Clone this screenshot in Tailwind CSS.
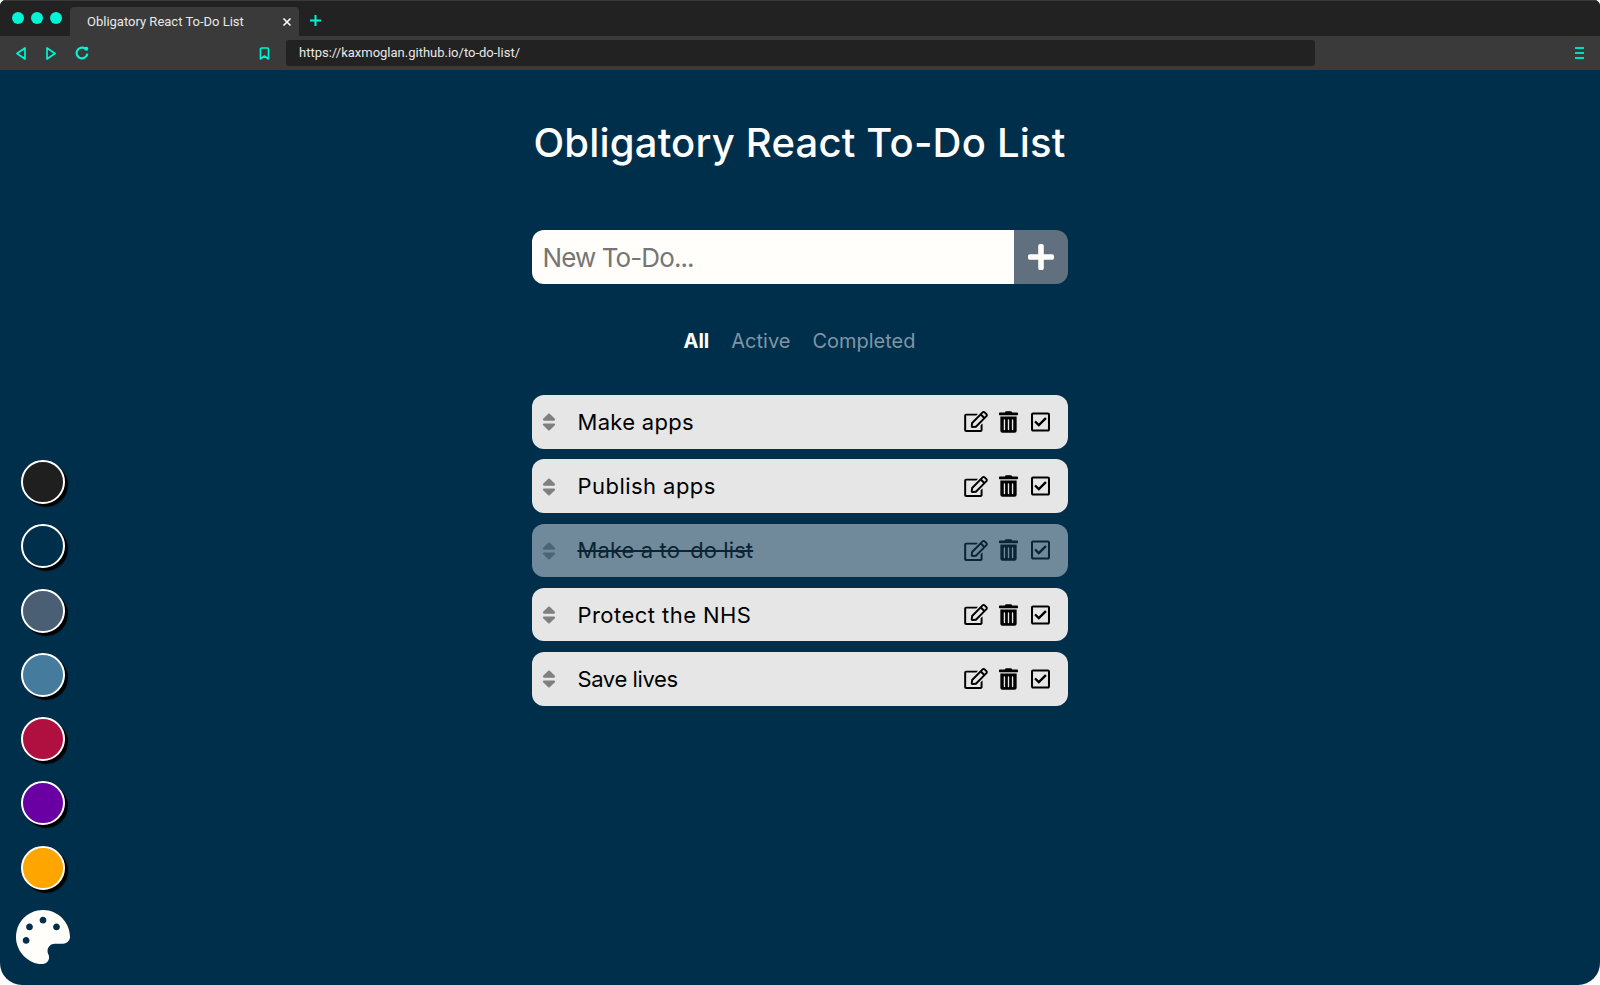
<!DOCTYPE html>
<html>
<head>
<meta charset="utf-8">
<title>Obligatory React To-Do List</title>
<script src="https://cdn.jsdelivr.net/npm/@tailwindcss/browser@4"></script>
</head>
<body class="bg-white h-[985px] overflow-hidden font-['Inter',sans-serif]">
<div class="h-[985px] flex flex-col bg-[#002f4b] rounded-t-[6px] rounded-b-[22px] overflow-hidden">

  <!-- browser chrome -->
  <div class="h-[36px] bg-[#222222] border-t border-[#3a3a3a] flex items-end shrink-0">
    <div class="flex items-center gap-[7px] w-[70px] pl-[12px] pb-[12px]">
      <span class="w-[12px] h-[12px] rounded-full bg-[#00f5d4]"></span>
      <span class="w-[12px] h-[12px] rounded-full bg-[#00f5d4]"></span>
      <span class="w-[12px] h-[12px] rounded-full bg-[#00f5d4]"></span>
    </div>
    <div class="w-[229px] h-[29px] bg-[#3a3a3a] rounded-t-[4px] flex items-center pl-[17px] pr-[7px] justify-between">
      <span class="font-['Roboto',sans-serif] text-[13px] text-[#e8e8e8] whitespace-nowrap">Obligatory React To-Do List</span>
      <svg class="w-[10px] h-[10px]" viewBox="0 0 10 10" fill="none" stroke="#ffffff" stroke-width="1.6"><path d="M1.5 1.5l7 7M8.5 1.5l-7 7"/></svg>
    </div>
    <svg class="w-[13px] h-[13px] ml-[10px] mb-[9px]" viewBox="0 0 13 13" fill="none" stroke="#00f5d4" stroke-width="2"><path d="M6.5 1v11M1 6.5h11"/></svg>
  </div>
  <div class="h-[34px] bg-[#3a3a3a] flex items-center shrink-0">
    <svg class="w-[10px] h-[13px] ml-[16px]" viewBox="0 0 10 13" fill="none" stroke="#00f5d4" stroke-width="1.7" stroke-linejoin="round"><path d="M9 1v11L1 6.5z"/></svg>
    <svg class="w-[10px] h-[13px] ml-[20px]" viewBox="0 0 10 13" fill="none" stroke="#00f5d4" stroke-width="1.7" stroke-linejoin="round"><path d="M1 1v11l8-5.500z"/></svg>
    <svg class="w-[14px] h-[14px] ml-[19px]" viewBox="0 0 13 13" fill="none" stroke="#00f5d4" stroke-width="2"><path d="M11.500 7a5 5 0 1 1-2-4.500"/><circle cx="10.500" cy="2.500" r="1.900" fill="#00f5d4" stroke="none"/></svg>
    <svg class="w-[11px] h-[13px] ml-[170px]" viewBox="0 0 11 13" fill="none" stroke="#00f5d4" stroke-width="1.6" stroke-linejoin="round"><path d="M1.500 2a1 1 0 0 1 1-1h6a1 1 0 0 1 1 1v10l-4-3-4 3z"/></svg>
    <div class="w-[1029px] h-[26px] ml-[16px] bg-[#222222] rounded-[3px] flex items-center pl-[13px]">
      <span class="font-['Roboto',sans-serif] text-[13px] text-[#e8e8e8] whitespace-nowrap">https://kaxmoglan.github.io/to-do-list/</span>
    </div>
    <div class="ml-auto mr-[16px] w-[9px] flex flex-col gap-[3px]">
      <span class="h-[2px] bg-[#00dcc0]"></span>
      <span class="h-[2px] bg-[#00dcc0]"></span>
      <span class="h-[2px] bg-[#00dcc0]"></span>
    </div>
  </div>

  <!-- page -->
  <div class="flex-1 grid grid-cols-[86px_1fr_87px]">
    <aside class="flex flex-col items-center justify-end gap-[20.300px] pb-[21px]">
      <button class="w-[44px] h-[44px] rounded-full border-2 border-white bg-[#1f1f1f] shadow-[3px_3px_1px_#000]"></button>
      <button class="w-[44px] h-[44px] rounded-full border-2 border-white bg-[#002f4b] shadow-[3px_3px_1px_#000]"></button>
      <button class="w-[44px] h-[44px] rounded-full border-2 border-white bg-[#4a5f73] shadow-[3px_3px_1px_#000]"></button>
      <button class="w-[44px] h-[44px] rounded-full border-2 border-white bg-[#457b9d] shadow-[3px_3px_1px_#000]"></button>
      <button class="w-[44px] h-[44px] rounded-full border-2 border-white bg-[#b0103f] shadow-[3px_3px_1px_#000]"></button>
      <button class="w-[44px] h-[44px] rounded-full border-2 border-white bg-[#6a00a3] shadow-[3px_3px_1px_#000]"></button>
      <button class="w-[44px] h-[44px] rounded-full border-2 border-white bg-[#ffa500] shadow-[3px_3px_1px_#000]"></button>
      <svg class="w-[54px] h-[54px]" viewBox="0 0 512 512" fill="#fffefa"><path d="M204.3 5C104.9 24.400 24.800 104.300 5.200 203.400c-37 187 131.700 326.400 258.800 306.700 41.200-6.400 61.400-54.600 42.500-91.700-23.100-45.400 9.900-98.400 60.900-98.400h79.700c35.800 0 64.800-29.600 64.900-65.300C511.500 97.100 368.100-26.900 204.300 5zM96 320c-17.700 0-32-14.300-32-32s14.300-32 32-32 32 14.300 32 32-14.300 32-32 32zm32-128c-17.700 0-32-14.300-32-32s14.300-32 32-32 32 14.300 32 32-14.300 32-32 32zm128-64c-17.700 0-32-14.300-32-32s14.300-32 32-32 32 14.300 32 32-14.300 32-32 32zm128 64c-17.700 0-32-14.300-32-32s14.300-32 32-32 32 14.300 32 32-14.300 32-32 32z"/></svg>
    </aside>

    <main class="flex flex-col items-center pt-[49px]">
      <h1 class="h-[48px] leading-[48px] text-[40px] font-medium tracking-[0.2px] text-white whitespace-nowrap">Obligatory React To-Do List</h1>

      <div class="w-[536px] h-[54px] mt-[63px] flex rounded-[12px] overflow-hidden">
        <div class="flex-1 bg-[#fffefa] flex items-center pl-[11px] text-[26px] tracking-[-0.9px] text-[#757575]">New To-Do...</div>
        <button class="w-[54px] bg-[#61707f] flex items-center justify-center">
          <svg class="w-[26px] h-[30px]" viewBox="0 0 448 512" fill="#fffefa"><path d="M416 208H272V64c0-17.670-14.330-32-32-32h-32c-17.670 0-32 14.330-32 32v144H32c-17.670 0-32 14.330-32 32v32c0 17.670 14.330 32 32 32h144v144c0 17.670 14.330 32 32 32h32c17.670 0 32-14.330 32-32V304h144c17.670 0 32-14.330 32-32v-32c0-17.670-14.330-32-32-32z"/></svg>
        </button>
      </div>

      <div class="h-[30px] mt-[41px] pt-[1px] flex items-center gap-[22px] text-[20px] leading-[30px] whitespace-nowrap text-[#7f95a5]">
        <span class="font-bold text-white">All</span>
        <span>Active</span>
        <span>Completed</span>
      </div>

      <ul class="w-[536px] mt-[40px] flex flex-col gap-[10.700px]" id="list">
        <li class="h-[53.600px] bg-[#e6e6e6] rounded-[12px] flex items-center text-black">
          <svg class="w-[14px] h-[22px] ml-[10px] mt-[1px] text-[#7f7f7f]" viewBox="0 0 320 512" fill="currentColor"><path d="M41 288h238c21.400 0 32.100 25.900 17 41L177 448c-9.400 9.400-24.600 9.400-33.900 0L24 329c-15.100-15.100-4.400-41 17-41zm255-105L177 64c-9.400-9.400-24.600-9.400-33.900 0L24 183c-15.100 15.100-4.400 41 17 41h238c21.400 0 32.100-25.900 17-41z"/></svg>
          <span class="ml-[22px] mt-[1px] text-[22px] tracking-[0.3px] whitespace-nowrap">Make apps</span>
          <svg class="w-[24px] h-[21px] ml-auto" viewBox="0 0 576 512" fill="currentColor"><path d="M402.300 344.900l32-32c5-5 13.700-1.500 13.700 5.700V464c0 26.500-21.500 48-48 48H48c-26.500 0-48-21.500-48-48V112c0-26.500 21.500-48 48-48h273.500c7.100 0 10.700 8.600 5.700 13.700l-32 32c-1.500 1.500-3.500 2.300-5.700 2.300H48v352h352V350.500c0-2.100.8-4.100 2.300-5.600zm156.600-201.800L296.300 405.700l-90.400 10c-26.200 2.900-48.500-19.200-45.600-45.600l10-90.400L432.900 17.100c22.900-22.900 59.900-22.900 82.700 0l43.200 43.200c22.900 22.900 22.900 60 .1 82.800zM460.100 174L402 115.900 216.200 301.800l-7.300 65.300 65.300-7.300L460.100 174zm64.800-79.700l-43.200-43.200c-4.100-4.100-10.800-4.100-14.800 0L436 82l58.100 58.100 30.900-30.900c4-4.200 4-10.800-.1-14.900z"/></svg>
          <svg class="w-[19px] h-[22px] ml-[11px]" viewBox="0 0 448 512" fill="currentColor"><path d="M32 464a48 48 0 0 0 48 48h288a48 48 0 0 0 48-48V128H32zm272-256a16 16 0 0 1 32 0v224a16 16 0 0 1-32 0zm-96 0a16 16 0 0 1 32 0v224a16 16 0 0 1-32 0zm-96 0a16 16 0 0 1 32 0v224a16 16 0 0 1-32 0zM432 32H312l-9.400-18.700A24 24 0 0 0 281.100 0H166.800a23.720 23.720 0 0 0-21.400 13.300L136 32H16A16 16 0 0 0 0 48v32a16 16 0 0 0 16 16h416a16 16 0 0 0 16-16V48a16 16 0 0 0-16-16z"/></svg>
          <svg class="w-[19px] h-[22px] ml-[13px] mr-[18px]" viewBox="0 0 448 512" fill="currentColor"><path d="M400 32H48C21.490 32 0 53.490 0 80v352c0 26.510 21.490 48 48 48h352c26.510 0 48-21.490 48-48V80c0-26.510-21.490-48-48-48zm0 400H48V80h352v352zm-35.864-241.724L191.547 361.480c-4.705 4.667-12.303 4.637-16.970-.068l-90.781-91.516c-4.667-4.705-4.637-12.303.069-16.971l22.719-22.536c4.705-4.667 12.303-4.637 16.970.069l59.792 60.277 141.352-140.216c4.705-4.667 12.303-4.637 16.970.068l22.536 22.718c4.667 4.706 4.637 12.304-.068 16.971z"/></svg>
        </li>
        <li class="h-[53.600px] bg-[#e6e6e6] rounded-[12px] flex items-center text-black">
          <svg class="w-[14px] h-[22px] ml-[10px] mt-[1px] text-[#7f7f7f]" viewBox="0 0 320 512" fill="currentColor"><path d="M41 288h238c21.400 0 32.100 25.900 17 41L177 448c-9.400 9.400-24.600 9.400-33.900 0L24 329c-15.100-15.100-4.400-41 17-41zm255-105L177 64c-9.400-9.400-24.600-9.400-33.900 0L24 183c-15.100 15.100-4.400 41 17 41h238c21.400 0 32.100-25.900 17-41z"/></svg>
          <span class="ml-[22px] mt-[1px] text-[22px] tracking-[0.45px] whitespace-nowrap">Publish apps</span>
          <svg class="w-[24px] h-[21px] ml-auto" viewBox="0 0 576 512" fill="currentColor"><path d="M402.300 344.900l32-32c5-5 13.700-1.500 13.700 5.700V464c0 26.500-21.500 48-48 48H48c-26.500 0-48-21.500-48-48V112c0-26.500 21.500-48 48-48h273.500c7.100 0 10.700 8.600 5.700 13.700l-32 32c-1.500 1.500-3.500 2.300-5.700 2.300H48v352h352V350.500c0-2.100.8-4.100 2.300-5.600zm156.600-201.800L296.300 405.700l-90.400 10c-26.200 2.900-48.500-19.200-45.600-45.600l10-90.400L432.900 17.100c22.900-22.900 59.900-22.900 82.700 0l43.200 43.200c22.900 22.900 22.900 60 .1 82.800zM460.100 174L402 115.900 216.200 301.800l-7.300 65.300 65.300-7.300L460.100 174zm64.800-79.700l-43.200-43.200c-4.100-4.100-10.800-4.100-14.800 0L436 82l58.100 58.100 30.900-30.900c4-4.200 4-10.800-.1-14.900z"/></svg>
          <svg class="w-[19px] h-[22px] ml-[11px]" viewBox="0 0 448 512" fill="currentColor"><path d="M32 464a48 48 0 0 0 48 48h288a48 48 0 0 0 48-48V128H32zm272-256a16 16 0 0 1 32 0v224a16 16 0 0 1-32 0zm-96 0a16 16 0 0 1 32 0v224a16 16 0 0 1-32 0zm-96 0a16 16 0 0 1 32 0v224a16 16 0 0 1-32 0zM432 32H312l-9.400-18.700A24 24 0 0 0 281.100 0H166.800a23.720 23.720 0 0 0-21.400 13.300L136 32H16A16 16 0 0 0 0 48v32a16 16 0 0 0 16 16h416a16 16 0 0 0 16-16V48a16 16 0 0 0-16-16z"/></svg>
          <svg class="w-[19px] h-[22px] ml-[13px] mr-[18px]" viewBox="0 0 448 512" fill="currentColor"><path d="M400 32H48C21.490 32 0 53.490 0 80v352c0 26.510 21.490 48 48 48h352c26.510 0 48-21.490 48-48V80c0-26.510-21.490-48-48-48zm0 400H48V80h352v352zm-35.864-241.724L191.547 361.480c-4.705 4.667-12.303 4.637-16.970-.068l-90.781-91.516c-4.667-4.705-4.637-12.303.069-16.971l22.719-22.536c4.705-4.667 12.303-4.637 16.970.069l59.792 60.277 141.352-140.216c4.705-4.667 12.303-4.637 16.970.068l22.536 22.718c4.667 4.706 4.637 12.304-.068 16.971z"/></svg>
        </li>
        <li class="h-[53.600px] bg-[#718a9b] rounded-[12px] flex items-center text-[#0b2433]">
          <svg class="w-[14px] h-[22px] ml-[10px] mt-[1px] text-[#4d6474]" viewBox="0 0 320 512" fill="currentColor"><path d="M41 288h238c21.400 0 32.100 25.900 17 41L177 448c-9.400 9.400-24.600 9.400-33.900 0L24 329c-15.100-15.100-4.400-41 17-41zm255-105L177 64c-9.400-9.400-24.600-9.400-33.900 0L24 183c-15.100 15.100-4.400 41 17 41h238c21.400 0 32.100-25.900 17-41z"/></svg>
          <span class="ml-[22px] mt-[1px] text-[22px] tracking-[0.1px] whitespace-nowrap line-through">Make a to-do list</span>
          <svg class="w-[24px] h-[21px] ml-auto" viewBox="0 0 576 512" fill="currentColor"><path d="M402.300 344.900l32-32c5-5 13.700-1.500 13.700 5.700V464c0 26.500-21.500 48-48 48H48c-26.500 0-48-21.500-48-48V112c0-26.500 21.500-48 48-48h273.500c7.100 0 10.700 8.600 5.700 13.700l-32 32c-1.500 1.500-3.500 2.300-5.700 2.300H48v352h352V350.500c0-2.100.8-4.100 2.300-5.600zm156.600-201.800L296.300 405.700l-90.400 10c-26.200 2.900-48.500-19.200-45.600-45.600l10-90.400L432.900 17.100c22.900-22.900 59.900-22.900 82.700 0l43.200 43.200c22.900 22.900 22.900 60 .1 82.800zM460.100 174L402 115.900 216.200 301.800l-7.300 65.300 65.300-7.300L460.100 174zm64.800-79.700l-43.200-43.200c-4.100-4.100-10.800-4.100-14.800 0L436 82l58.100 58.100 30.900-30.900c4-4.200 4-10.800-.1-14.900z"/></svg>
          <svg class="w-[19px] h-[22px] ml-[11px]" viewBox="0 0 448 512" fill="currentColor"><path d="M32 464a48 48 0 0 0 48 48h288a48 48 0 0 0 48-48V128H32zm272-256a16 16 0 0 1 32 0v224a16 16 0 0 1-32 0zm-96 0a16 16 0 0 1 32 0v224a16 16 0 0 1-32 0zm-96 0a16 16 0 0 1 32 0v224a16 16 0 0 1-32 0zM432 32H312l-9.400-18.700A24 24 0 0 0 281.100 0H166.800a23.720 23.720 0 0 0-21.400 13.300L136 32H16A16 16 0 0 0 0 48v32a16 16 0 0 0 16 16h416a16 16 0 0 0 16-16V48a16 16 0 0 0-16-16z"/></svg>
          <svg class="w-[19px] h-[22px] ml-[13px] mr-[18px]" viewBox="0 0 448 512" fill="currentColor"><path d="M400 32H48C21.490 32 0 53.490 0 80v352c0 26.510 21.490 48 48 48h352c26.510 0 48-21.490 48-48V80c0-26.510-21.490-48-48-48zm0 400H48V80h352v352zm-35.864-241.724L191.547 361.480c-4.705 4.667-12.303 4.637-16.970-.068l-90.781-91.516c-4.667-4.705-4.637-12.303.069-16.971l22.719-22.536c4.705-4.667 12.303-4.637 16.970.069l59.792 60.277 141.352-140.216c4.705-4.667 12.303-4.637 16.970.068l22.536 22.718c4.667 4.706 4.637 12.304-.068 16.971z"/></svg>
        </li>
        <li class="h-[53.600px] bg-[#e6e6e6] rounded-[12px] flex items-center text-black">
          <svg class="w-[14px] h-[22px] ml-[10px] mt-[1px] text-[#7f7f7f]" viewBox="0 0 320 512" fill="currentColor"><path d="M41 288h238c21.400 0 32.100 25.900 17 41L177 448c-9.400 9.400-24.600 9.400-33.900 0L24 329c-15.100-15.100-4.400-41 17-41zm255-105L177 64c-9.400-9.400-24.600-9.400-33.900 0L24 183c-15.100 15.100-4.400 41 17 41h238c21.400 0 32.100-25.900 17-41z"/></svg>
          <span class="ml-[22px] mt-[1px] text-[22px] tracking-[0.45px] whitespace-nowrap">Protect the NHS</span>
          <svg class="w-[24px] h-[21px] ml-auto" viewBox="0 0 576 512" fill="currentColor"><path d="M402.300 344.900l32-32c5-5 13.700-1.500 13.700 5.700V464c0 26.500-21.500 48-48 48H48c-26.500 0-48-21.500-48-48V112c0-26.500 21.500-48 48-48h273.500c7.100 0 10.700 8.600 5.700 13.700l-32 32c-1.500 1.500-3.500 2.300-5.700 2.300H48v352h352V350.500c0-2.100.8-4.100 2.300-5.600zm156.600-201.800L296.300 405.700l-90.400 10c-26.200 2.900-48.500-19.200-45.600-45.600l10-90.400L432.900 17.100c22.900-22.900 59.900-22.900 82.700 0l43.200 43.200c22.900 22.900 22.900 60 .1 82.800zM460.100 174L402 115.900 216.200 301.800l-7.300 65.300 65.300-7.300L460.100 174zm64.800-79.700l-43.200-43.200c-4.100-4.100-10.800-4.100-14.800 0L436 82l58.100 58.100 30.900-30.900c4-4.200 4-10.800-.1-14.900z"/></svg>
          <svg class="w-[19px] h-[22px] ml-[11px]" viewBox="0 0 448 512" fill="currentColor"><path d="M32 464a48 48 0 0 0 48 48h288a48 48 0 0 0 48-48V128H32zm272-256a16 16 0 0 1 32 0v224a16 16 0 0 1-32 0zm-96 0a16 16 0 0 1 32 0v224a16 16 0 0 1-32 0zm-96 0a16 16 0 0 1 32 0v224a16 16 0 0 1-32 0zM432 32H312l-9.400-18.700A24 24 0 0 0 281.100 0H166.800a23.720 23.720 0 0 0-21.400 13.300L136 32H16A16 16 0 0 0 0 48v32a16 16 0 0 0 16 16h416a16 16 0 0 0 16-16V48a16 16 0 0 0-16-16z"/></svg>
          <svg class="w-[19px] h-[22px] ml-[13px] mr-[18px]" viewBox="0 0 448 512" fill="currentColor"><path d="M400 32H48C21.490 32 0 53.490 0 80v352c0 26.510 21.490 48 48 48h352c26.510 0 48-21.490 48-48V80c0-26.510-21.490-48-48-48zm0 400H48V80h352v352zm-35.864-241.724L191.547 361.480c-4.705 4.667-12.303 4.637-16.970-.068l-90.781-91.516c-4.667-4.705-4.637-12.303.069-16.971l22.719-22.536c4.705-4.667 12.303-4.637 16.970.069l59.792 60.277 141.352-140.216c4.705-4.667 12.303-4.637 16.970.068l22.536 22.718c4.667 4.706 4.637 12.304-.068 16.971z"/></svg>
        </li>
        <li class="h-[53.600px] bg-[#e6e6e6] rounded-[12px] flex items-center text-black">
          <svg class="w-[14px] h-[22px] ml-[10px] mt-[1px] text-[#7f7f7f]" viewBox="0 0 320 512" fill="currentColor"><path d="M41 288h238c21.400 0 32.100 25.900 17 41L177 448c-9.400 9.400-24.600 9.400-33.900 0L24 329c-15.100-15.100-4.400-41 17-41zm255-105L177 64c-9.400-9.400-24.600-9.400-33.900 0L24 183c-15.100 15.100-4.400 41 17 41h238c21.400 0 32.100-25.900 17-41z"/></svg>
          <span class="ml-[22px] mt-[1px] text-[22px] tracking-[-0.4px] whitespace-nowrap">Save lives</span>
          <svg class="w-[24px] h-[21px] ml-auto" viewBox="0 0 576 512" fill="currentColor"><path d="M402.300 344.900l32-32c5-5 13.700-1.500 13.700 5.700V464c0 26.500-21.500 48-48 48H48c-26.500 0-48-21.500-48-48V112c0-26.500 21.500-48 48-48h273.500c7.100 0 10.700 8.600 5.700 13.700l-32 32c-1.500 1.500-3.500 2.300-5.700 2.300H48v352h352V350.500c0-2.100.8-4.100 2.300-5.600zm156.600-201.800L296.300 405.700l-90.400 10c-26.200 2.900-48.500-19.200-45.600-45.600l10-90.400L432.900 17.100c22.900-22.900 59.900-22.900 82.700 0l43.200 43.200c22.900 22.900 22.900 60 .1 82.800zM460.100 174L402 115.900 216.200 301.800l-7.300 65.300 65.300-7.300L460.100 174zm64.800-79.700l-43.200-43.200c-4.100-4.100-10.800-4.100-14.800 0L436 82l58.100 58.100 30.900-30.900c4-4.200 4-10.800-.1-14.900z"/></svg>
          <svg class="w-[19px] h-[22px] ml-[11px]" viewBox="0 0 448 512" fill="currentColor"><path d="M32 464a48 48 0 0 0 48 48h288a48 48 0 0 0 48-48V128H32zm272-256a16 16 0 0 1 32 0v224a16 16 0 0 1-32 0zm-96 0a16 16 0 0 1 32 0v224a16 16 0 0 1-32 0zm-96 0a16 16 0 0 1 32 0v224a16 16 0 0 1-32 0zM432 32H312l-9.400-18.700A24 24 0 0 0 281.100 0H166.800a23.720 23.720 0 0 0-21.400 13.300L136 32H16A16 16 0 0 0 0 48v32a16 16 0 0 0 16 16h416a16 16 0 0 0 16-16V48a16 16 0 0 0-16-16z"/></svg>
          <svg class="w-[19px] h-[22px] ml-[13px] mr-[18px]" viewBox="0 0 448 512" fill="currentColor"><path d="M400 32H48C21.490 32 0 53.490 0 80v352c0 26.510 21.490 48 48 48h352c26.510 0 48-21.490 48-48V80c0-26.510-21.490-48-48-48zm0 400H48V80h352v352zm-35.864-241.724L191.547 361.480c-4.705 4.667-12.303 4.637-16.970-.068l-90.781-91.516c-4.667-4.705-4.637-12.303.069-16.971l22.719-22.536c4.705-4.667 12.303-4.637 16.970.069l59.792 60.277 141.352-140.216c4.705-4.667 12.303-4.637 16.970.068l22.536 22.718c4.667 4.706 4.637 12.304-.068 16.971z"/></svg>
        </li>
      </ul>
    </main>
    <div></div>
  </div>
</div>
</body>
</html>
